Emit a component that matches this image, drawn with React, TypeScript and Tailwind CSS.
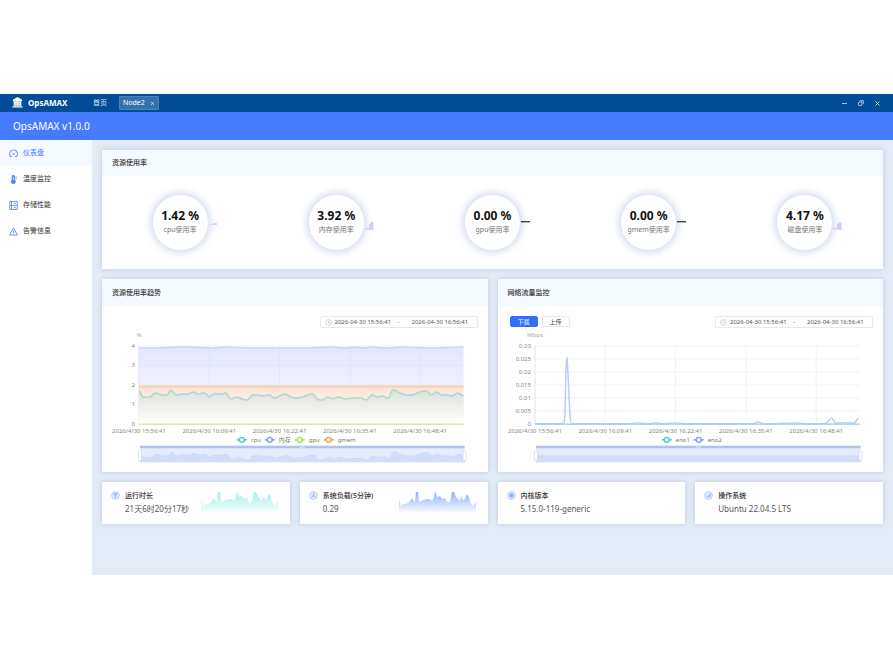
import { useState } from "react";
import type { ReactNode } from "react";
import { Copy, Minus, X } from "lucide-react";

type Point = [number, number];

const gauges = [
  { value: "1.42 %", label: "cpu使用率", kind: "low" },
  { value: "3.92 %", label: "内存使用率", kind: "step" },
  { value: "0.00 %", label: "gpu使用率", kind: "zero" },
  { value: "0.00 %", label: "gmem使用率", kind: "zero" },
  { value: "4.17 %", label: "磁盘使用率", kind: "step" },
];

const times = [
  "2026/4/30 15:56:41",
  "2026/4/30 16:09:41",
  "2026/4/30 16:22:41",
  "2026/4/30 16:35:41",
  "2026/4/30 16:48:41",
];

// chart plot area: x 37..362, y 16..94
const cpuPoints: Point[] = [
  [37, 61], [41, 67], [48, 67], [53, 63], [60, 65], [65, 65], [69, 60], [74, 65], [80, 64], [86, 64],
  [91, 62], [96, 64], [103, 63], [107, 67], [112, 64], [120, 64], [124, 63], [129, 69], [135, 67], [140, 69],
  [146, 70], [151, 65], [156, 65], [162, 66], [168, 65], [172, 68], [178, 66], [183, 64], [189, 67], [193, 68],
  [201, 67], [211, 64], [215, 69], [221, 70], [226, 67], [231, 69], [237, 67], [243, 69], [250, 68], [259, 68],
  [265, 70], [270, 65], [275, 67], [281, 66], [287, 68], [291, 60], [298, 63], [305, 65], [311, 65], [318, 62],
  [325, 61], [330, 65], [335, 62], [340, 65], [346, 65], [351, 66], [356, 63], [362, 66],
];

const memPoints: Point[] = [
  [37, 18], [55, 18], [75, 17], [90, 17], [110, 18], [125, 17], [150, 18], [200, 18],
  [230, 17], [245, 18], [254, 17], [262, 18], [270, 17], [285, 18], [300, 17], [330, 18], [362, 17],
];

const eno2Points: Point[] = [
  [37, 94], [65, 94], [67, 84], [68, 42], [69, 27], [70, 42], [72, 84], [74, 94], [130, 94], [140, 93],
  [150, 94], [158, 93], [165, 94], [178, 93], [190, 94], [255, 94], [260, 92], [266, 94], [298, 93],
  [310, 94], [329, 93], [334, 88], [338, 93], [357, 93], [361, 88],
];

const sparkPoints: Point[] = [
  [0, 9], [2, 15], [4, 13], [7, 13], [10, 11], [13, 7], [15, 10], [16, 11], [17, 1], [19, 1], [20, 11],
  [24, 9], [28, 8], [31, 8], [33, 10], [35, 6], [36, 0], [38, 6], [41, 5], [43, 8], [46, 7], [48, 11],
  [51, 11], [53, 1], [55, 1], [57, 6], [59, 8], [61, 10], [62, 5], [64, 9], [66, 8], [68, 3], [70, 6],
  [71, 11], [74, 15], [77, 11],
];

function smooth(points: Point[]) {
  let d = `M${points[0][0]} ${points[0][1]}`;
  for (let i = 1; i < points.length; i++) {
    const before = points[i - 2] ?? points[i - 1];
    const from = points[i - 1];
    const to = points[i];
    const after = points[i + 1] ?? to;
    const dx = (to[0] - from[0]) / 3;
    const slopeA = (to[1] - before[1]) / (to[0] - before[0]);
    const slopeB = (after[1] - from[1]) / (after[0] - from[0]);
    // keep flat stretches flat next to a steep rise
    const flat = from[1] === to[1];
    const a = flat ? from[1] : from[1] + (before[1] === from[1] ? 0 : slopeA * dx);
    const b = flat ? to[1] : to[1] - (after[1] === to[1] ? 0 : slopeB * dx);
    d += ` C${from[0] + dx} ${a} ${to[0] - dx} ${b} ${to[0]} ${to[1]}`;
  }
  return d;
}

export default function App() {
  return (
    <div className="bg-white pt-[94px] font-['Noto_Sans','Noto_Sans_CJK_SC',sans-serif] text-[#333]">
      <TitleBar />
      <header className="flex h-[28px] items-center bg-[#477bff] px-[13px]">
        <h1 className="text-[10px] text-white">OpsAMAX v1.0.0</h1>
      </header>
      <div className="flex">
        <Sidebar />
        <main className="flex min-w-0 flex-1 flex-col gap-[10px] bg-[#e3ebf7] px-[10px] pt-[10px] pb-[51px]">
          <section className="bg-white shadow-[0_0_5px_rgba(130,150,185,0.4)]">
            <div className="flex h-[26px] items-center bg-[#f4faff] px-[10px]">
              <h2 className="text-[7px] font-medium">资源使用率</h2>
            </div>
            <div className="grid grid-cols-5 justify-items-center py-[18px]">
              {gauges.map((g) => (
                <Gauge key={g.label} {...g} />
              ))}
            </div>
          </section>

          <div className="grid grid-cols-2 gap-[10px]">
            <ChartCard title="资源使用率趋势">
              <UsageChart />
            </ChartCard>
            <ChartCard title="网络流量监控" tabs>
              <NetworkChart />
            </ChartCard>
          </div>

          <div className="grid grid-cols-4 gap-[10px]">
            <InfoCard title="运行时长" value="21天6时20分17秒" icon="clock" spark="#93f0e8" />
            <InfoCard title="系统负载(5分钟)" value="0.29" icon="load" spark="#86abff" />
            <InfoCard title="内核版本" value="5.15.0-119-generic" icon="core" />
            <InfoCard title="操作系统" value="Ubuntu 22.04.5 LTS" icon="os" />
          </div>
        </main>
      </div>
    </div>
  );
}

function TitleBar() {
  return (
    <div className="flex h-[18px] items-center bg-[#004c97] pr-[12px] pl-[12px] text-white">
      <svg viewBox="0 0 12 12" className="mb-[1px] h-[11px] w-[11px]" fill="#fff">
        <path d="M6 0 11 3v1.5H1V3zM1.800 5h8.400v4.500H1.800zM.5 10h11v1.500H.5z" />
        <path d="M3.700 5.800v3M5.200 5.800v3M6.800 5.800v3M8.300 5.800v3" stroke="#6d9ac5" strokeWidth=".5" />
      </svg>
      <span className="ml-[5px] w-[65px] text-[8px] font-bold">OpsAMAX</span>
      <a href="#" className="w-[26px] text-[7px] text-[#d9e5f1]">首页</a>
      <div className="flex h-[14px] w-[40px] items-center justify-between rounded-[1px] border border-[#4d84b8] bg-[#3472ae] px-[3px]">
        <a href="#" className="text-[7px]">Node2</a>
        <button aria-label="关闭标签"><X size={5} strokeWidth={3} /></button>
      </div>
      <div className="ml-auto flex items-center gap-[10px] text-[#cfdeec]">
        <button aria-label="最小化"><Minus size={7} strokeWidth={3} /></button>
        <button aria-label="还原"><Copy size={6} strokeWidth={3} className="-scale-x-100" /></button>
        <button aria-label="关闭"><X size={7} strokeWidth={3} /></button>
      </div>
    </div>
  );
}

function Sidebar() {
  return (
    <nav className="w-[92px] shrink-0 bg-white text-[7px]">
      <a href="#" className="flex h-[26px] items-center gap-[5px] bg-[#f4faff] px-[9px] text-[#477bff]">
        <svg viewBox="0 0 10 10" className="h-[9px] w-[9px]" fill="none" stroke="#6b93ff" strokeWidth="1.2">
          <path d="M1.900 8.400A4.300 4.300 0 1 1 8.100 8.400M1.600 8.400h1.800M6.600 8.400h1.800M4.600 6.600 6.200 4.800" />
        </svg>
        仪表盘
      </a>
      <a href="#" className="flex h-[26px] items-center gap-[5px] px-[9px]">
        <svg viewBox="0 0 10 10" className="h-[9px] w-[9px]" fill="#5b87ff">
          <path d="M3 1.700a1.800 1.800 0 0 1 3.600 0v3.500a2.700 2.700 0 1 1-3.600 0z" />
          <path d="M7.300 1h1.200v4H7.300z" opacity=".6" />
          <path d="M4.500 2.200h.8v3.400h-.8z" fill="#cfdcff" />
        </svg>
        温度监控
      </a>
      <a href="#" className="flex h-[26px] items-center gap-[5px] px-[9px]">
        <svg viewBox="0 0 10 10" className="h-[9px] w-[9px]" fill="none" stroke="#6b93ff" strokeWidth="1.1">
          <path d="M.8.6h8.400v8.800H.8zM.8 5h8.400M2.800.6v8.800" />
          <path d="M5.500 2.800h2M5.500 7.200h2" />
        </svg>
        存储性能
      </a>
      <a href="#" className="flex h-[26px] items-center gap-[5px] px-[9px]">
        <svg viewBox="0 0 10 10" className="h-[9px] w-[9px]" fill="none" stroke="#6b93ff" strokeWidth="1.1" strokeLinejoin="round">
          <path d="M5 1 9.400 9H.6zM5 4v2.500M5 7.200v.9" />
        </svg>
        告警信息
      </a>
    </nav>
  );
}

function Gauge({ value, label, kind }: { value: string; label: string; kind: string }) {
  return (
    <div className="relative flex h-[57px] w-[57px] flex-col items-center justify-center rounded-full border border-[#e1e7f5] bg-white whitespace-nowrap shadow-[0_0_7px_2px_rgba(150,172,220,0.4)]">
      <strong className="text-[12px] leading-[14px] font-bold text-[#111]">{value}</strong>
      <span className="text-[7px] leading-[14px] text-[#777]">{label}</span>
      <svg viewBox="0 0 9 12" className="absolute top-[25px] left-[56px] h-[12px] w-[9px]">
        {kind === "zero" && <path d="M0 1h9v1.400H0z" fill="#3d4652" />}
        {kind === "low" && <path d="M1 4h3v1H1zM4 3h4v2H4z" fill="#d9d5fb" />}
        {kind === "step" && <path d="M0 8h5v1.400H0zM4 4h1.500v5H4zM5.500 2H8.500v8h-3z" fill="#d3cffb" />}
      </svg>
    </div>
  );
}

function ChartCard({ title, tabs, children }: { title: string; tabs?: boolean; children: ReactNode }) {
  const [tab, setTab] = useState("下载");

  return (
    <section className="min-w-0 bg-white shadow-[0_0_5px_rgba(130,150,185,0.4)]">
      <div className="flex h-[28px] items-center bg-[#f4faff] px-[10px]">
        <h2 className="text-[7px] font-medium">{title}</h2>
      </div>
      <div className="flex items-start gap-1 pt-[9px] pr-[10px] pl-[12px]">
        {tabs &&
          ["下载", "上传"].map((name) => (
            <button
              key={name}
              onClick={() => setTab(name)}
              className={
                "h-[11px] w-[28px] rounded-[2px] border text-[6px] leading-[8px] " +
                (tab === name ? "border-[#346eff] bg-[#346eff] text-white" : "border-[#e4e7ee] bg-white text-[#444]")
              }
            >
              {name}
            </button>
          ))}
        <div className="ml-auto flex h-[12px] w-[158px] items-center rounded-[2px] border border-[#e6e9ef] pl-1 text-[6px] text-[#555]">
          <svg viewBox="0 0 8 8" className="mr-[3px] h-[7px] w-[7px]" fill="none" stroke="#b9bec8" strokeWidth=".8">
            <circle cx="4" cy="4" r="3.3" />
            <path d="M4 2v2.300h1.600" />
          </svg>
          <input aria-label="开始时间" defaultValue="2026-04-30 15:56:41" className="h-[10px] w-[60px]" />
          <span className="w-[17px] pl-[3px]">-</span>
          <input aria-label="结束时间" defaultValue="2026-04-30 16:56:41" className="h-[10px] w-[60px]" />
        </div>
      </div>
      <div className="pt-[2px]">{children}</div>
    </section>
  );
}

function Axis({ ticks, unit }: { ticks: string[]; unit: string }) {
  const step = 78 / (ticks.length - 1);
  return (
    <g fontSize="6" fill="#888">
      <text x="37" y="7" textAnchor="middle" fill="#aaa">{unit}</text>
      {ticks.map((t, i) => (
        <g key={t}>
          <path d={`M37 ${94 - i * step}H362`} stroke="#f1f2f5" />
          <text x="33" y={96 - i * step} textAnchor="end">{t}</text>
        </g>
      ))}
      {times.map((t, i) => (
        <g key={t}>
          <path d={`M${37 + i * 70.4} 16V94`} stroke={i === 0 ? "#dfe2ea" : "#f1f2f5"} />
          <text x={37 + i * 70.4} y="103" textAnchor="middle">{t}</text>
        </g>
      ))}
    </g>
  );
}

function Legend({ x, color, name }: { x: number; color: string; name: string }) {
  return (
    <g>
      <path d={`M${x - 5} 110h10`} stroke={color} strokeWidth="1.6" />
      <circle cx={x} cy="110" r="2.5" fill="#fff" stroke={color} strokeWidth="1.4" />
      <text x={x + 9} y="112" fontSize="6" fill="#777">{name}</text>
    </g>
  );
}

function ZoomBar({ area }: { area: string }) {
  return (
    <g>
      <path d="M38 116h325v16H38z" fill="#e4edfd" />
      <path d={area} fill="#d2ddf7" stroke="#c8d4f4" strokeWidth=".6" />
      <path d="M38 116h325v2.500H38z" fill="#b2bfe8" />
      <path d="M198 117.200h5" stroke="#e4edfd" />
      {[38, 363].map((x) => (
        <rect key={x} x={x - 1.5} y="121" width="3" height="10" rx="1" fill="#fff" stroke="#c6cfe6" strokeWidth=".6" />
      ))}
    </g>
  );
}

function UsageChart() {
  const cpu = smooth(cpuPoints);
  const mem = smooth(memPoints);
  const preview = smooth(cpuPoints.map(([x, y]): Point => [x + 1, 122 + (y - 60) * 0.8]));

  return (
    <svg viewBox="0 0 386 142" className="block w-full" fill="none" role="img" aria-label="资源使用率趋势">
      <defs>
        <linearGradient id="mem" x2="0" y2="1">
          <stop stopColor="#ccd2fb" stopOpacity=".55" />
          <stop offset="1" stopColor="#e6eafd" stopOpacity=".3" />
        </linearGradient>
        <linearGradient id="gmem" x2="0" y2="1">
          <stop stopColor="#ffdcc6" stopOpacity=".75" />
          <stop offset="1" stopColor="#fff" stopOpacity=".7" />
        </linearGradient>
        <linearGradient id="cpu" x2="0" y2="1">
          <stop stopColor="#cfe0d5" stopOpacity=".75" />
          <stop offset="1" stopColor="#fff" stopOpacity=".5" />
        </linearGradient>
      </defs>
      <Axis unit="%" ticks={["0", "1", "2", "3", "4"]} />
      <path d={`${mem}V94H37z`} fill="url(#mem)" />
      <path d={mem} stroke="#ccd4fb" strokeWidth="1.4" />
      <path d="M37 56h325v38H37z" fill="url(#gmem)" />
      <path d={`${cpu}V94H37z`} fill="url(#cpu)" />
      <path d={cpu} stroke="#a4dad3" strokeWidth="1.5" />
      <path d="M37 56.500h325" stroke="#f9cfab" strokeWidth="2" />
      <path d="M37 94.300h325" stroke="#d3eda0" strokeWidth="1.5" />
      <Legend x={140} color="#45cdd2" name="cpu" />
      <Legend x={168} color="#8297ff" name="内存" />
      <Legend x={198} color="#a9e545" name="gpu" />
      <Legend x={227} color="#ff9b45" name="gmem" />
      <ZoomBar area={`${preview}V132H38z`} />
    </svg>
  );
}

function NetworkChart() {
  return (
    <svg viewBox="0 0 386 142" className="block w-full" fill="none" role="img" aria-label="网络流量监控">
      <Axis unit="Mbps" ticks={["0", "0.005", "0.01", "0.015", "0.02", "0.025", "0.03"]} />
      <path d={smooth(eno2Points)} stroke="#bcc7fd" strokeWidth="1.4" />
      <path d="M37 94.300h325" stroke="#93d2ec" strokeWidth="1.2" />
      <Legend x={169} color="#45cdd2" name="eno1" />
      <Legend x={201} color="#8297ff" name="eno2" />
      <ZoomBar area="M38 126h325v6H38z" />
    </svg>
  );
}

function InfoIcon({ icon }: { icon: string }) {
  return (
    <svg viewBox="0 0 10 10" className="mt-[2px] h-[9px] w-[9px]" fill="none" stroke="#7299ff" strokeWidth=".9">
      <circle cx="5" cy="5" r="4.4" fill="#dfe8ff" stroke="#b4c8ff" strokeWidth=".8" />
      {icon === "clock" && <path d="M3.200 3h3.600L5 5zM5 5v2.500" />}
      {icon === "load" && <path d="M5 2.500v2.500L2.800 7M5 5l2.200 2" />}
      {icon === "core" && <path d="M3.500 3.500h3v3h-3z" fill="#8fb0ff" />}
      {icon === "os" && <path d="M6.600 3v4M3.300 6.500h2L6.600 4" />}
    </svg>
  );
}

function InfoCard(props: { title: string; value: string; icon: string; spark?: string }) {
  const { title, value, icon, spark } = props;
  return (
    <section className="flex h-[42px] min-w-0 items-center bg-white pr-[12px] pl-[9px] whitespace-nowrap shadow-[0_0_5px_rgba(130,150,185,0.4)]">
      <div className="flex gap-[5px]">
        <InfoIcon icon={icon} />
        <div>
          <h3 className="text-[7px] leading-[13px] font-medium">{title}</h3>
          <p className="text-[8px] leading-[14px] text-[#555]">{value}</p>
        </div>
      </div>
      {spark && (
        <svg viewBox="0 0 77 22" className="mb-[2px] ml-auto h-[22px] w-[77px] shrink-0">
          <defs>
            <linearGradient id={icon} x2="0" y2="1">
              <stop stopColor={spark} />
              <stop offset="1" stopColor={spark} stopOpacity="0" />
            </linearGradient>
          </defs>
          <path d={`M${sparkPoints.join("L")}V22H0z`} fill={`url(#${icon})`} />
        </svg>
      )}
    </section>
  );
}
